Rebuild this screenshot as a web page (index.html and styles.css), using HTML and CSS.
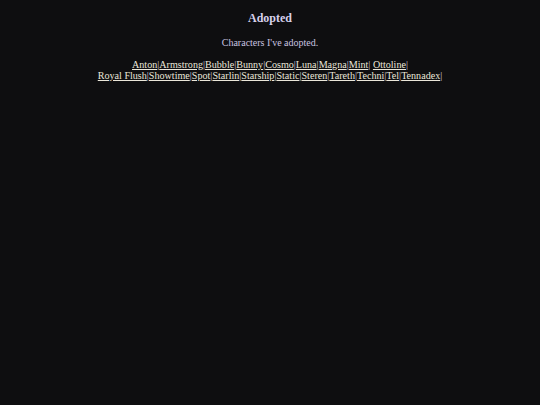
FILE: index.html
```html
<!DOCTYPE html>
<html lang="en">
<head>
<meta charset="utf-8">
<title>Adopted</title>
<link rel="stylesheet" href="styles.css">
</head>
<body>
<main class="page">
  <h1 class="title">Adopted</h1>
  <p class="intro">Characters I've adopted.</p>
  <p class="roster">
    <a href="#">Anton</a>|<a href="#">Armstrong</a>|<a href="#">Bubble</a>|<a href="#">Bunny</a>|<a href="#">Cosmo</a>|<a href="#">Luna</a>|<a href="#">Magna</a>|<a href="#">Mint</a>| <a href="#">Ottoline</a>|<br>
    <a href="#">Royal Flush</a>|<a href="#">Showtime</a>|<a href="#">Spot</a>|<a href="#">Starlin</a>|<a href="#">Starship</a>|<a href="#">Static</a>|<a href="#">Steren</a>|<a href="#">Tareth</a>|<a href="#">Techni</a>|<a href="#">Tel</a>|<a href="#">Tennadex</a>|
  </p>
</main>
</body>
</html>
```

FILE: styles.css
```css
html, body {
  margin: 0;
  padding: 0;
  background: #0e0e10;
}

body {
  font-family: "Liberation Serif", "Times New Roman", serif;
  color: #c9c3e0;
}

.page {
  text-align: center;
  padding-top: 11px;
}

.title {
  margin: 0;
  font-size: 12px;
  font-weight: bold;
  line-height: 15px;
  color: #d6d0ec;
}

.intro {
  margin: 10px 0 0;
  font-size: 10px;
  line-height: 13px;
}

.roster {
  margin: 10px 0 0;
  font-size: 10.1px;
  line-height: 11px;
  color: #d0cbdc;
}

.roster a {
  color: #ebe7da;
  text-decoration: underline;
}
```
